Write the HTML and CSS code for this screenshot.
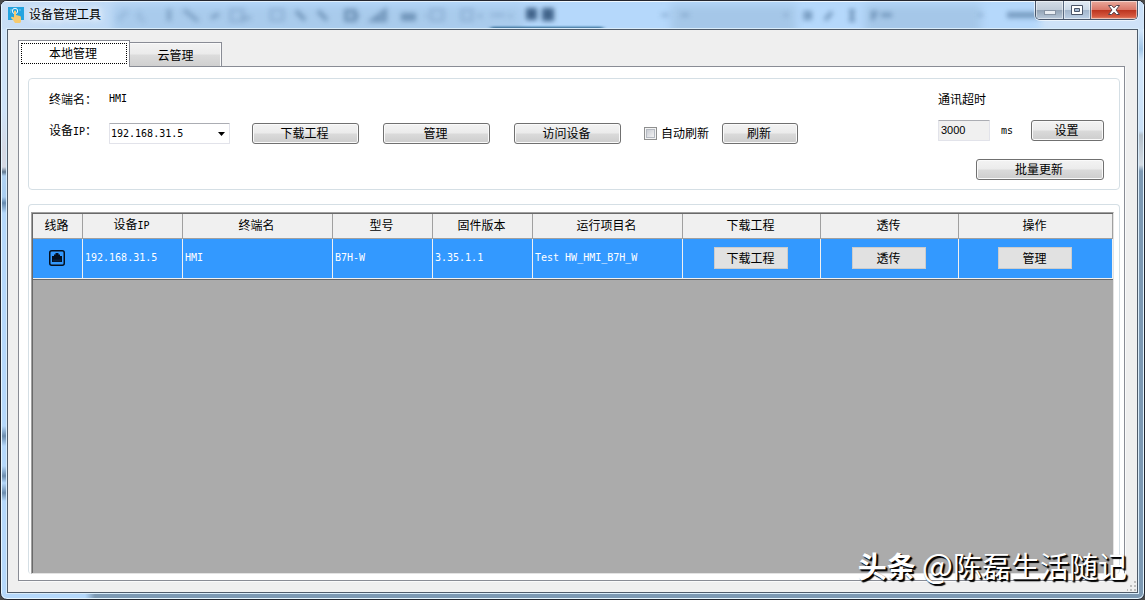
FILE: index.html
```html
<!DOCTYPE html>
<html lang="zh-CN">
<head>
<meta charset="utf-8">
<title>设备管理工具</title>
<link rel="stylesheet" href="styles.css">
</head>
<body>
<div class="window">
  <header class="titlebar">
    <svg class="glass" width="1145" height="28" viewBox="0 0 1145 28" aria-hidden="true">
      <defs>
        <filter id="soft" x="-20%" y="-50%" width="140%" height="200%"><feGaussianBlur stdDeviation="2.500"/></filter>
        <filter id="wide" x="-20%" y="-50%" width="140%" height="200%"><feGaussianBlur stdDeviation="4"/></filter>
        <filter id="edge" x="-20%" y="-200%" width="140%" height="500%"><feGaussianBlur stdDeviation="2 1"/></filter>
      </defs>
      <g filter="url(#wide)">
        <rect x="112" y="4" width="410" height="30" fill="#a9cbec"/>
        <rect x="670" y="4" width="125" height="30" fill="#a5c7e8"/>
        <rect x="864" y="4" width="116" height="30" fill="#a5c7e8"/>
        <rect x="1040" y="12" width="105" height="20" fill="#cfe2f8"/>
      </g>
      <g filter="url(#soft)" fill="none" stroke="#6488ae" stroke-width="4" opacity=".8">
        <path d="M117 19l9-9M140 11q-6 6 4 9" opacity=".3"/>
        <path d="M168 8v12M183 9l14 11M210 17l8-4" opacity=".8"/>
        <path d="M230 9h12v11h-12zM270 9h12v10h-12zM430 9h12v10h-12zM461 9h10v10h-10zM490 14h14" opacity=".35"/>
        <path d="M295 10l9 9M317 10l9 9M345 10h9v9h-9zM354 15h4M372 19l12-9v9zM400 14h15M400 18h15"/>
        <path d="M240 17h10M424 15h2M477 15h4M508 15h3M660 14h8M680 14h8M783 14h4M977 14h5" opacity=".5"/>
        <path d="M802 12h7v5h-7M824 19l7-8M848 10h6M851 11v9M848 19h6M870 12h4l-3 7M880 14h11"/>
        <path d="M1006 14h34" stroke-width="6"/>
      </g>
      <g filter="url(#soft)" fill="#41648a"><rect x="525" y="7" width="11" height="12"/><rect x="541" y="7" width="12" height="13"/></g>
      <rect x="490" y="26" width="112" height="4" fill="#205f8a" filter="url(#edge)"/>
    </svg>
    <svg class="app-icon" width="16" height="16" viewBox="0 0 16 16" aria-hidden="true">
      <path d="M0 0h16v13H0z" fill="#23a3df"/>
      <circle cx="7" cy="4" r="2.7" fill="none" stroke="#e6f5fc"/>
      <path d="M2 3h2M2 5h1M11 3h2" stroke="#7bcbed"/>
      <path d="M6 4q1-1 2 0v4l4 1q1 0 1 2v4l-1 1H7l-2-3-2-2q0-2 3-.5z" fill="#f5ca70"/>
    </svg>
    <h1 class="title">设备管理工具</h1>
    <div class="caption-buttons">
      <button class="cap cap-min" type="button" aria-label="最小化"><svg width="14" height="12" viewBox="0 0 14 12"><rect x="1.500" y="6.500" width="11" height="4" fill="#e9edf2" stroke="#8793a3"/></svg></button>
      <button class="cap cap-max" type="button" aria-label="最大化"><svg width="14" height="12" viewBox="0 0 14 12"><path d="M1.500 1.500h11v9h-11z" fill="#fff" stroke="#4b5568"/><path d="M4.500 4.500h5v3h-5z" fill="#a7bbd4" stroke="#4b5568"/></svg></button>
      <button class="cap cap-close" type="button" aria-label="关闭"><svg width="14" height="12" viewBox="0 0 14 12"><path d="M1.500 1.500h3L7 3.700l2.500-2.200h3L9 6l3.500 4.500h-3L7 8.300l-2.500 2.200h-3L5 6z" fill="#fff" stroke="#54424c"/></svg></button>
    </div>
  </header>

  <main class="client">
    <div class="tabs" role="tablist">
      <button class="tab active" type="button" role="tab" aria-selected="true">本地管理</button>
      <button class="tab" type="button" role="tab" aria-selected="false">云管理</button>
    </div>
    <div class="page" role="tabpanel">
      <section class="group controls">
        <div class="device">
          <div class="line">
            <span class="caption">终端名：</span><span class="mono">HMI</span>
          </div>
          <div class="line fields">
            <label class="caption" for="ip">设备<span class="mono">IP</span>：</label>
            <div class="combo">
              <select id="ip"><option>192.168.31.5</option></select>
              <svg class="arrow" width="7" height="4" viewBox="0 0 7 4" aria-hidden="true"><path d="M0 0h7L3.500 4z"/></svg>
            </div>
            <div class="actions">
              <button class="btn wide" type="button">下载工程</button>
              <button class="btn wide" type="button">管理</button>
              <button class="btn wide" type="button">访问设备</button>
            </div>
            <label class="check"><input type="checkbox">自动刷新</label>
            <button class="btn refresh" type="button">刷新</button>
          </div>
        </div>
        <div class="timeout">
          <label class="line" for="timeout">通讯超时</label>
          <div class="timeout-row">
            <input id="timeout" type="text" value="3000">
            <span class="mono">ms</span>
            <button class="btn set" type="button">设置</button>
          </div>
          <button class="btn batch" type="button">批量更新</button>
        </div>
      </section>

      <section class="group list">
        <div class="grid">
          <table>
            <colgroup><col class="w50"><col class="w100"><col class="w150"><col class="w100"><col class="w100"><col class="w150"><col class="w138"><col class="w138"><col></colgroup>
            <thead>
              <tr><th>线路</th><th>设备<span class="mono">IP</span></th><th>终端名</th><th>型号</th><th>固件版本</th><th>运行项目名</th><th>下载工程</th><th>透传</th><th>操作</th></tr>
            </thead>
            <tbody>
              <tr>
                <td class="center"><svg class="port" width="16" height="16" viewBox="0 0 16 16" role="img" aria-label="有线"><rect x=".75" y=".75" width="14.500" height="14.500" rx="2" fill="none" stroke="#041020" stroke-width="1.500"/><path d="M3 12V6h2V4.500h1.500V3h3v1.500H11V6h2v6z" fill="#041020"/><path d="M5 11.500v-2M7 11.500v-2M9 11.500v-2M11 11.500v-2" stroke="#123f73" stroke-width=".8"/></svg></td>
                <td class="mono">192.168.31.5</td>
                <td class="mono">HMI</td>
                <td class="mono">B7H-W</td>
                <td class="mono">3.35.1.1</td>
                <td class="mono">Test HW_HMI_B7H_W</td>
                <td class="center"><button class="cell-btn" type="button">下载工程</button></td>
                <td class="center"><button class="cell-btn" type="button">透传</button></td>
                <td class="center"><button class="cell-btn" type="button">管理</button></td>
              </tr>
            </tbody>
          </table>
        </div>
      </section>
    </div>
    <svg class="grip" width="10" height="10" viewBox="0 0 10 10" aria-hidden="true"><path d="M7 0h2v2H7zM7 4h2v2H7zM3 4h2v2H3zM7 8h2v2H7zM3 8h2v2H3zM0 8h1v2H0z" fill="#bdbdbd"/></svg>
  </main>
  <div class="watermark"><b>头条</b><span><span class="at">@</span>陈磊生活随记</span></div>
</div>
</body>
</html>
```

FILE: styles.css
```css
* { box-sizing: border-box; }

body {
  margin: 0;
  background: #4a4a4a;
  color: #000;
  font: 12px/20px "Noto Sans CJK SC", sans-serif;
}

button, input, select { font: inherit; color: inherit; margin: 0; }

.mono { font-family: "DejaVu Sans Mono", "Noto Sans CJK SC", monospace; font-size: 10px; }

/* Window frame */
.window {
  position: relative;
  display: flex;
  flex-direction: column;
  min-height: 100vh;
  padding: 0 6px 6px;
  border: 1px solid #23252e;
  border-radius: 7px;
  overflow: hidden;
  box-shadow: inset 0 0 0 1px #e6f6ff;
  background:
    linear-gradient(90deg, #b5d8fb 84px, #7d99b3 94px) bottom / 100% 7px no-repeat,
    linear-gradient(#cfe4fa 30px, #9fc4e6 48px, #d4e8fc 60px, #c9e0f7 130px, #b3bfca 134px, #d3dbe3 164px, #7d99b3 170px) right / 7px 100% no-repeat,
    linear-gradient(#cfe3f8 110px, #d5d9e4 148px, #d5d9e4 166px, #60778e 171px, #b0d2f2 175px, #a9cdf0 196px, #6488ad 202px, #b5d8fb 212px, #b5d8fb 425px, #6b8cae 435px, #b5d8fb 445px, #b5d8fb 465px, #6b8cae 475px, #b5d8fb 482px, #6b8cae 492px, #b5d8fb 500px) left / 7px 100% no-repeat,
    #b5d8fb;
}

.titlebar {
  position: relative;
  display: flex;
  align-items: center;
  gap: 5px;
  height: 28px;
  flex: none;
  margin: 0 -6px;
  padding: 0 6px 0 7px;
  background: linear-gradient(90deg, #c9def5, #bfdaf6 110px, #b5d8fb 180px, #b5d8fb 90%, #c9e0f9);
  box-shadow: inset 0 1px #eff8ff, inset 1px 0 #e6f6ff, inset -1px 0 #e6f6ff;
}
.glass { position: absolute; left: 0; top: 0; }
.app-icon { position: relative; }
.title {
  position: relative;
  margin: 0;
  padding-bottom: 2px;
  font-size: 12px;
  font-weight: 400;
  text-shadow: 0 0 6px #fff, 0 0 10px #fff;
}

.caption-buttons {
  position: relative;
  display: flex;
  align-self: flex-start;
  margin-left: auto;
  border: 1px solid #48566b;
  border-top: 0;
  border-radius: 0 0 5px 5px;
  overflow: hidden;
  box-shadow: 0 0 0 1px rgba(255, 255, 255, .6);
}
.cap {
  display: flex;
  align-items: center;
  justify-content: center;
  width: 27px;
  height: 18px;
  padding: 0;
  border: 0;
  border-right: 1px solid #58687f;
  background: linear-gradient(#e2ebf5, #ccd9e8 48%, #a3b6cc 52%, #bdd0e6);
  box-shadow: inset 0 0 0 1px rgba(255, 255, 255, .5);
}
.cap-min { width: 28px; background: linear-gradient(#d3dce6, #c0cbd8 48%, #93a3b5 52%, #bac9da); }
.cap-close { width: 46px; border-right: 0; background: linear-gradient(#e9a99c, #da7869 48%, #bd3520 52%, #d5583f 85%, #e28a70); }

/* Client area */
.client {
  position: relative;
  display: flex;
  flex-direction: column;
  flex: 1;
  padding: 10px 12px 11px 10px;
  border: 1px solid #4f5b69;
  background: #efefef;
  box-shadow: 0 0 0 1px #d9ecfa;
}
.grip { position: absolute; right: 0; bottom: 1px; }

.tabs { display: flex; align-items: flex-end; height: 26px; }
.tab {
  width: 92px;
  height: 24px;
  padding: 0;
  line-height: 20px;
  border: 1px solid #898c95;
  border-width: 1px 1px 0 0;
  background: linear-gradient(#f3f3f3, #ebebeb 48%, #dcdcdc 52%, #d0d0d0);
  box-shadow: inset -1px 1px #fafafa;
}
.tab.active {
  position: relative;
  z-index: 1;
  width: 112px;
  height: 27px;
  margin-bottom: -1px;
  padding: 0 2px 2px 0;
  border-left-width: 1px;
  background: #fff;
  box-shadow: none;
  outline: 1px dotted #000;
  outline-offset: -4px;
}

.page {
  display: flex;
  flex-direction: column;
  gap: 14px;
  flex: 1;
  padding: 11px 4px 6px 9px;
  border: 1px solid #898c95;
  background: #fff;
  box-shadow: 1px 1px #fafafa;
}

.group { border: 1px solid #d5dfe5; border-radius: 4px; }

.controls {
  display: flex;
  justify-content: space-between;
  padding: 10px 15px 9px 20px;
}
.line { display: flex; }
.caption { width: 60px; flex: none; }
.fields { margin-top: 14px; }
.fields .caption { line-height: 14px; }

.combo { position: relative; width: 121px; margin-right: 22px; }
.combo select {
  display: block;
  width: 100%;
  height: 21px;
  padding: 0 1px 2px;
  appearance: none;
  border: 1px solid #e2e3ea;
  border-top-color: #abadb3;
  border-radius: 1px;
  background: #fff;
  font-family: "DejaVu Sans Mono", monospace;
  font-size: 10px;
}
.arrow { position: absolute; right: 5px; top: 9px; pointer-events: none; }

.actions { display: flex; gap: 24px; }
.btn {
  height: 21px;
  padding: 0 2px 2px 0;
  line-height: 17px;
  border: 1px solid #707070;
  border-radius: 3px;
  background: linear-gradient(#f3f3f3, #ebebeb 48%, #dadada 52%, #cdcdcd);
  box-shadow: inset 0 0 0 1px #fafafa;
}
.btn.wide { width: 107px; }
.btn.refresh { width: 76px; margin-left: 13px; }
.btn.set { width: 73px; margin-left: auto; }
.btn.batch { display: block; width: 128px; margin: 18px 0 0 auto; }

.check { display: flex; align-items: center; gap: 4px; height: 20px; margin-left: 23px; }
.check input {
  width: 13px;
  height: 13px;
  appearance: none;
  border: 1px solid #8e8f8f;
  background: linear-gradient(135deg, #c9ccd3, #f3f3f3) center / 7px 7px no-repeat, #f4f4f4;
  box-shadow: inset 0 0 0 1px #f4f4f4, inset 0 0 0 2px #b5bac2;
}

.timeout { width: 166px; }
.timeout-row { display: flex; align-items: center; margin-top: 11px; }
.timeout-row .mono { margin-left: 11px; }
.timeout-row input {
  width: 52px;
  height: 21px;
  padding: 0 2px 2px;
  border: 1px solid #e2e3ea;
  border-top-color: #abadb3;
  border-radius: 1px;
  background: #f0f0f0;
  font-family: "Liberation Sans", sans-serif;
  font-size: 11px;
}

/* Device grid */
.list { display: flex; flex: 1; padding: 7px 5px 0 2px; border-bottom: 0; }
.grid {
  flex: 1;
  border: 1px solid #a0a0a0;
  border-right-color: #e3e3e3;
  border-bottom-color: #e3e3e3;
  background: #ababab;
  box-shadow: inset 1px 1px #696969;
  padding: 1px 0 0 1px;
}
table { width: 100%; table-layout: fixed; border-collapse: separate; border-spacing: 0; border-bottom: 1px solid #696969; }
.w50 { width: 50px; }
.w100 { width: 100px; }
.w138 { width: 138px; }
.w150 { width: 150px; }
th {
  height: 25px;
  padding: 0 2px 2px 0;
  line-height: 20px;
  font-weight: 400;
  border-right: 1px solid #a0a0a0;
  border-bottom: 1px solid #a0a0a0;
  background: #f0f0f0;
}
td {
  height: 40px;
  padding: 0 2px 2px;
  border-right: 1px solid #f0f0f0;
  border-bottom: 1px solid #f0f0f0;
  background: #3399ff;
  color: #fff;
  white-space: nowrap;
}
td.center { padding: 0 2px 2px 0; text-align: center; }
.port { display: block; margin: 0 auto; }
.cell-btn {
  display: block;
  width: 74px;
  height: 22px;
  margin: 0 auto;
  padding: 0;
  line-height: 20px;
  border: 1px solid #cccccc;
  background: #e1e1e1;
  color: #000;
}

.watermark {
  position: absolute;
  right: 17px;
  bottom: 14px;
  display: flex;
  gap: 6px;
  font-size: 29px;
  line-height: 40px;
  color: #fff;
  text-shadow: 1px 1px 1px #000, 2px 2px 1px #000;
  pointer-events: none;
}
.watermark .at { font-size: 33px; line-height: 1; }
```
